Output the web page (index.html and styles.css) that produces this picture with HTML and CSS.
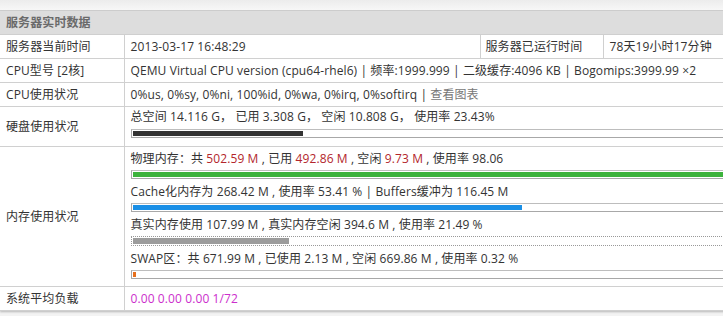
FILE: index.html
```html
<!DOCTYPE html>
<html>
<head>
<meta charset="utf-8">
<link rel="stylesheet" href="styles.css">
</head>
<body>
<div class="page">
  <div class="topstrip"></div>
  <table class="info">
    <colgroup>
      <col class="c1"><col class="c2"><col class="c3"><col class="c4">
    </colgroup>
    <tr class="head"><th colspan="4">服务器实时数据</th></tr>
    <tr class="r">
      <td class="label">服务器当前时间</td>
      <td>2013-03-17 16:48:29</td>
      <td class="label2">服务器已运行时间</td>
      <td>78天19小时17分钟</td>
    </tr>
    <tr class="r">
      <td class="label">CPU型号 [2核]</td>
      <td colspan="3">QEMU Virtual CPU version (cpu64-rhel6) | 频率:1999.999 | 二级缓存:4096 KB | Bogomips:3999.99 ×2</td>
    </tr>
    <tr class="r">
      <td class="label">CPU使用状况</td>
      <td colspan="3">0%us, 0%sy, 0%ni, 100%id, 0%wa, 0%irq, 0%softirq | <a class="link">查看图表</a></td>
    </tr>
    <tr class="r">
      <td class="label">硬盘使用状况</td>
      <td colspan="3" class="multi disk">
        <div class="line">总空间 14.116 G，&nbsp;已用 3.308 G，&nbsp;空闲 10.808 G，&nbsp;使用率 23.43%</div>
        <div class="bar"><div class="fill dark" style="width:23.43%"></div></div>
      </td>
    </tr>
    <tr class="r">
      <td class="label">内存使用状况</td>
      <td colspan="3" class="multi mem">
        <div class="item">
          <div class="line">物理内存：共 <span class="red">502.59 M</span> , 已用 <span class="red">492.86 M</span> , 空闲 <span class="red">9.73 M</span> , 使用率 98.06</div>
          <div class="bar"><div class="fill green" style="width:98.06%"></div></div>
        </div>
        <div class="item">
          <div class="line">Cache化内存为 268.42 M , 使用率 53.41 % | Buffers缓冲为 116.45 M</div>
          <div class="bar"><div class="fill blue" style="width:53.41%"></div></div>
        </div>
        <div class="item">
          <div class="line">真实内存使用 107.99 M , 真实内存空闲 394.6 M , 使用率 21.49 %</div>
          <div class="bar dotted"><div class="fill gray" style="width:21.49%"></div></div>
        </div>
        <div class="item">
          <div class="line">SWAP区：共 671.99 M , 已使用 2.13 M , 空闲 669.86 M , 使用率 0.32 %</div>
          <div class="bar"><div class="fill orange" style="width:0.32%"></div></div>
        </div>
      </td>
    </tr>
    <tr class="r">
      <td class="label">系统平均负载</td>
      <td colspan="3" class="load">0.00 0.00 0.00 1/72</td>
    </tr>
  </table>
</div>
</body>
</html>
```
FILE: styles.css
```css
html, body {
  margin: 0;
  padding: 0;
}
body {
  background: #f3f3f3;
  font-family: "Open Sans", "Noto Sans CJK SC", sans-serif;
  font-size: 12px;
  letter-spacing: 0.1px;
  color: #333;
}
.page {
  width: 723px;
  height: 316px;
  overflow: hidden;
}
.topstrip {
  height: 10px;
  background: linear-gradient(#ececec, #f7f7f7);
  border-bottom: 1px solid #d0d0d0;
}
.info {
  width: 870px;
  table-layout: fixed;
  border-collapse: collapse;
  background: #fff;
  box-shadow: 0 1px 2px rgba(0,0,0,0.25);
}
.c1 { width: 124px; }
.c2 { width: 356px; }
.c3 { width: 123px; }
.c4 { width: 267px; }
.head th {
  background: #dddddd;
  color: #6a6a6a;
  font-weight: bold;
  text-align: left;
  height: 23px;
  line-height: 23px;
  padding: 0 6px;
  border-bottom: 1px solid #cfcfcf;
}
.r td {
  border-bottom: 1px solid #d0d0d0;
  border-right: 1px solid #d0d0d0;
  padding: 0 6px;
  height: 23px;
  line-height: 23px;
  vertical-align: middle;
  white-space: nowrap;
}
.r td.label2 {
  padding-left: 5px;
}
.link {
  color: #777;
}
.multi {
  padding: 0 6px 8px !important;
  line-height: 20px !important;
}
.multi .line {
  line-height: 20px;
}
.bar {
  border: 1px solid #a8a8a8;
  border-top-color: #bdbdbd;
  padding: 1px;
  height: 5px;
  margin-top: 2px;
}
.bar.dotted {
  border: 1px dotted #999;
  height: 6px;
}
.fill {
  height: 5px;
  min-width: 3px;
}
.dark { background: #333; }
.green { background: #3cb23c; }
.blue { background: #1a8fe6; }
.gray { background: #9c9c9c; height: 6px; }
.orange { background: #e66f1c; }
.mem {
  padding-top: 2px !important;
  padding-bottom: 7px !important;
}
.mem .item + .item {
  margin-top: 3px;
}
.mem .bar {
  margin-top: 1px;
}
.red {
  color: #b3262c;
}
.load {
  color: #cc2fcc;
}
```
